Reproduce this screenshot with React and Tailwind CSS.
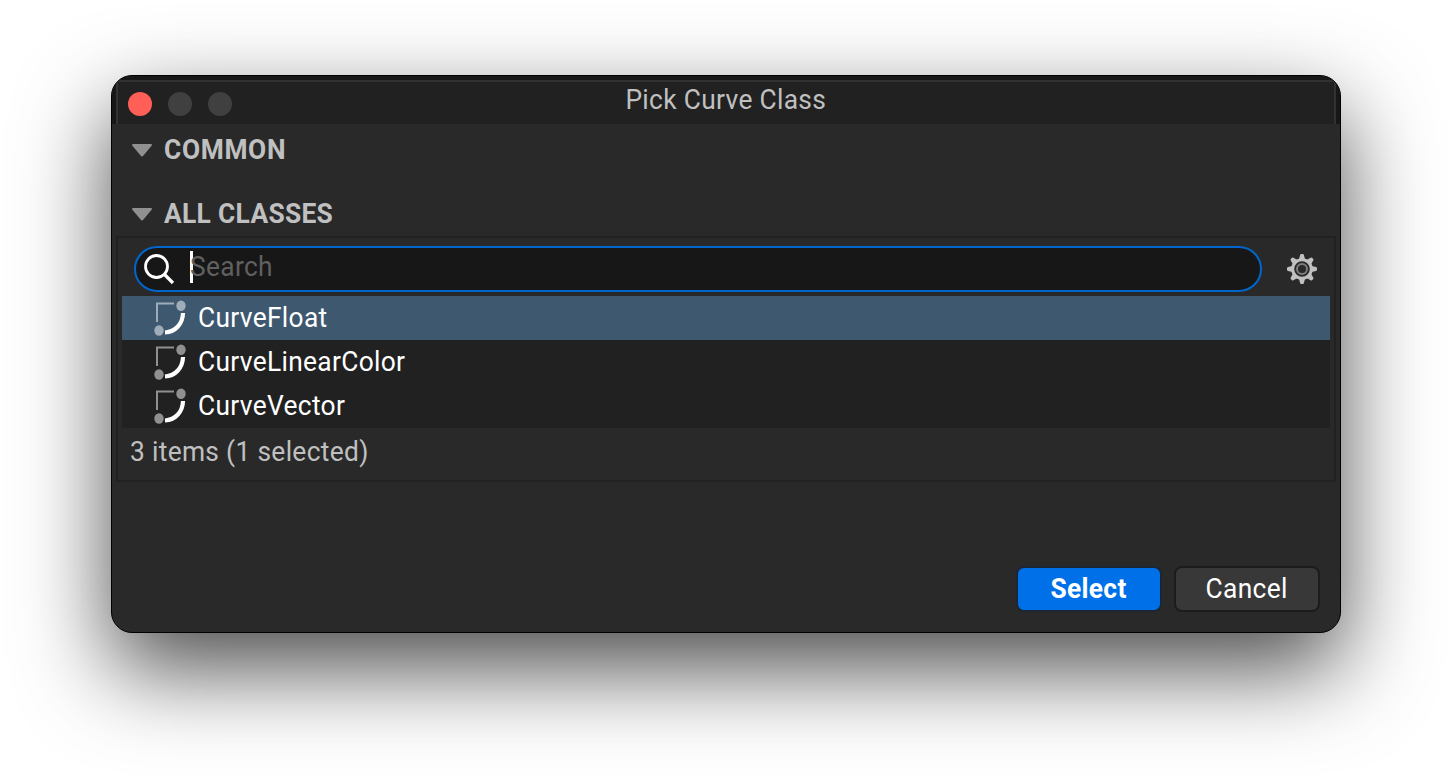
import React from "react";

const classes = ["CurveFloat", "CurveLinearColor", "CurveVector"];

function CurveIcon({ selected }) {
  const muted = selected ? "#9fadb9" : "#909090";
  return (
    <svg width="32" height="36" viewBox="0 0 32 36" fill="none" className="shrink-0">
      <path d="M3 22V3.5H20" stroke={muted} strokeWidth="2" />
      <ellipse cx="27" cy="5.7" rx="4.7" ry="5.2" fill={muted} />
      <ellipse cx="5" cy="30.5" rx="4.7" ry="5.2" fill={muted} />
      <path d="M29 13C28.8 23.5 21.5 32 11 32.5" stroke="#fff" strokeWidth="4.2" />
    </svg>
  );
}

function GearIcon() {
  return (
    <svg width="32" height="32" viewBox="-16 -16 32 32" className="shrink-0">
      {[0, 45, 90, 135, 180, 225, 270, 315].map((a) => (
        <path key={a} d="M-3.1 -9.5L-1.9 -14Q-1.7 -15 -.8 -15H.8Q1.7 -15 1.9 -14L3.1 -9.5Z" fill="#c0c0c0" transform={`rotate(${a})`} />
      ))}
      <circle r="9.3" fill="#292929" stroke="#c0c0c0" strokeWidth="3" />
      <circle r="5" fill="none" stroke="#7d7d7d" strokeWidth="2" />
    </svg>
  );
}

// Slightly condensed label, used for all text in the dialog.
function Label({ className = "origin-left", children }) {
  return <span className={`inline-block scale-x-[0.94] whitespace-nowrap ${className}`}>{children}</span>;
}

function SectionHeader({ children, className = "" }) {
  return (
    <div className={`flex h-[50px] items-center pl-5 font-bold text-[#c0c0c0] ${className}`}>
      <svg width="20" height="13" viewBox="0 0 20 13" className="mt-[3px] mr-3">
        <path d="M1 0H19Q20.6 .4 19.6 1.8L11.2 11.8Q10 13 8.8 11.8L.4 1.8Q-.6 .4 1 0Z" fill="#909090" />
      </svg>
      <Label className="origin-left pt-0.5">{children}</Label>
    </div>
  );
}

export default function App() {
  return (
    <div className="flex h-[780px] w-[1452px] items-start justify-center overflow-hidden bg-white pt-[75px] font-['Roboto',sans-serif] text-[28px] leading-8 tracking-[0.35px]">
      <div className="flex h-[558px] w-[1230px] flex-col overflow-hidden rounded-[21px] border border-black bg-[#292929] shadow-[0_36px_90px_rgba(0,0,0,0.7)]">
        <div className="h-12 shrink-0 bg-[#171717] px-1 pt-1">
          <div className="grid h-11 grid-cols-[1fr_auto_1fr] items-start border-2 border-b-0 border-[#323232] bg-[#212121]">
            <div className="flex gap-4 pt-[10px] pl-[10px]">
              <span className="size-6 rounded-full bg-[#ff5f57]" />
              <span className="size-6 rounded-full bg-[#404040]" />
              <span className="size-6 rounded-full bg-[#404040]" />
            </div>
            <Label className="origin-center pt-[2px] text-[#c0c0c0]">Pick Curve Class</Label>
          </div>
        </div>
        <SectionHeader className="tracking-[0.7px]">COMMON</SectionHeader>
        <div className="h-[14px]" />
        <SectionHeader>ALL CLASSES</SectionHeader>
        <div className="mx-1 -mt-0.5 flex h-[246px] shrink-0 flex-col border-2 border-[#212121] px-1">
          <div className="flex h-[58px] items-center pt-1 pr-3 pl-3">
            <div className="flex h-[46px] flex-1 items-center rounded-full border-2 border-[#0066cc] bg-[#171717] pl-2">
              <svg width="32" height="32" viewBox="0 0 32 32" fill="none" stroke="#fff" strokeWidth="2.8" className="shrink-0">
                <circle cx="12.5" cy="13.5" r="11" />
                <path d="M20.5 21.5L29 30" strokeWidth="3.2" />
              </svg>
              <span className="-mt-1 ml-[14px] h-8 w-[3px] bg-white" />
              <Label className="-mt-1 -ml-[3px] origin-left text-[#606060]">Search</Label>
            </div>
            <div className="ml-6"><GearIcon /></div>
          </div>
          <div className="h-[132px] bg-[#212121]">
            {classes.map((name, i) => (
              <div key={name} className={`flex h-11 items-center gap-3 pl-8 text-white ${i === 0 ? "bg-[#3e586f]" : ""}`}>
                <CurveIcon selected={i === 0} />
                <Label>{name}</Label>
              </div>
            ))}
          </div>
          <div className="pt-2 pl-2 text-[#c0c0c0]"><Label>3 items (1 selected)</Label></div>
        </div>
        <div className="mt-auto mr-5 mb-5 flex justify-end gap-3">
          <button className="h-[46px] w-[146px] rounded-[8px] border-2 border-[#1c2733] bg-[#0070e8] font-bold text-white"><Label className="origin-center">Select</Label></button>
          <button className="h-[46px] w-[146px] rounded-[8px] border-2 border-[#1c1c1c] bg-[#383838] text-white"><Label className="origin-center">Cancel</Label></button>
        </div>
      </div>
    </div>
  );
}
